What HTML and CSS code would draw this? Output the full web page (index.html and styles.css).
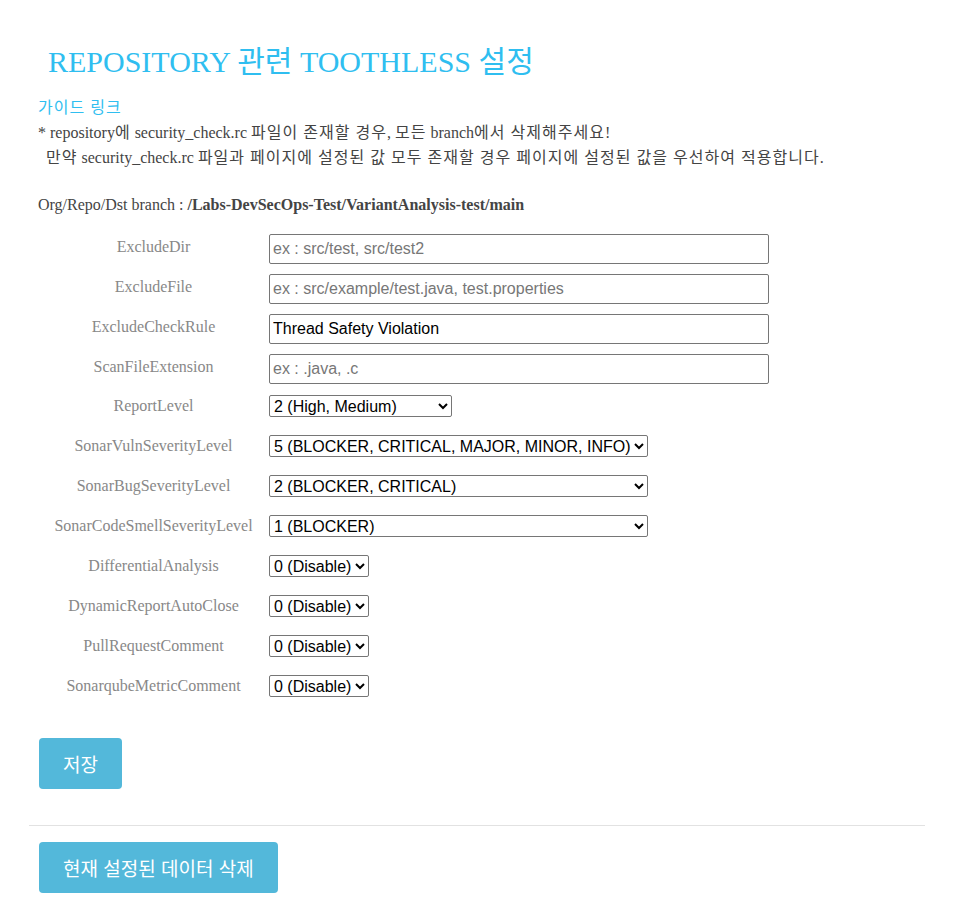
FILE: index.html
```html
<!DOCTYPE html>
<html lang="ko">
<head>
<meta charset="utf-8">
<title>Toothless 설정</title>
<link rel="stylesheet" href="styles.css">
</head>
<body>
<div class="page">
  <h1 class="title">REPOSITORY 관련 TOOTHLESS 설정</h1>
  <div class="notice">
    <a class="guide" href="#">가이드 링크</a>
    <p class="line">* repository<span class="ko">에</span> security_check.rc <span class="ko">파일이 존재할 경우</span>, <span class="ko">모든</span> branch<span class="ko">에서 삭제해주세요</span>!</p>
    <p class="line">&nbsp;&nbsp;<span class="ko">만약</span> security_check.rc <span class="ko">파일과 페이지에 설정된 값 모두 존재할 경우 페이지에 설정된 값을 우선하여 적용합니다</span>.</p>
  </div>
  <p class="branch">Org/Repo/Dst branch : <b>/Labs-DevSecOps-Test/VariantAnalysis-test/main</b></p>

  <div class="form">
    <div class="row row-input">
      <label class="label">ExcludeDir</label>
      <input class="text" type="text" placeholder="ex : src/test, src/test2">
    </div>
    <div class="row row-input">
      <label class="label">ExcludeFile</label>
      <input class="text" type="text" placeholder="ex : src/example/test.java, test.properties">
    </div>
    <div class="row row-input">
      <label class="label">ExcludeCheckRule</label>
      <input class="text" type="text" value="Thread Safety Violation">
    </div>
    <div class="row row-input">
      <label class="label">ScanFileExtension</label>
      <input class="text" type="text" placeholder="ex : .java, .c">
    </div>
    <div class="row row-select first-select">
      <label class="label">ReportLevel</label>
      <select class="sel sel-report"><option>2 (High, Medium)</option></select>
    </div>
    <div class="row row-select">
      <label class="label">SonarVulnSeverityLevel</label>
      <select class="sel sel-wide"><option>5 (BLOCKER, CRITICAL, MAJOR, MINOR, INFO)</option></select>
    </div>
    <div class="row row-select">
      <label class="label">SonarBugSeverityLevel</label>
      <select class="sel sel-wide"><option>2 (BLOCKER, CRITICAL)</option></select>
    </div>
    <div class="row row-select">
      <label class="label">SonarCodeSmellSeverityLevel</label>
      <select class="sel sel-wide"><option>1 (BLOCKER)</option></select>
    </div>
    <div class="row row-select">
      <label class="label">DifferentialAnalysis</label>
      <select class="sel"><option>0 (Disable)</option></select>
    </div>
    <div class="row row-select">
      <label class="label">DynamicReportAutoClose</label>
      <select class="sel"><option>0 (Disable)</option></select>
    </div>
    <div class="row row-select">
      <label class="label">PullRequestComment</label>
      <select class="sel"><option>0 (Disable)</option></select>
    </div>
    <div class="row row-select">
      <label class="label">SonarqubeMetricComment</label>
      <select class="sel"><option>0 (Disable)</option></select>
    </div>
  </div>

  <div class="actions actions-save">
    <button class="btn" type="button">저장</button>
  </div>
  <hr class="divider">
  <div class="actions">
    <button class="btn" type="button">현재 설정된 데이터 삭제</button>
  </div>
</div>
</body>
</html>
```

FILE: styles.css
```css
html, body {
  margin: 0;
  padding: 0;
  background: #ffffff;
}

body {
  font-family: "Liberation Serif", "Noto Sans CJK KR", serif;
  color: #333333;
}

.page {
  margin: 0 30px 0 29px;
  padding-top: 40px;
  padding-bottom: 22px;
}

.title {
  margin: 0 0 0 19px;
  font-size: 30px;
  font-weight: normal;
  line-height: 44px;
  color: #2fbef0;
}

.notice {
  margin: 11px 0 0 9px;
  font-size: 16px;
}

.guide {
  display: block;
  color: #2fbef0;
  text-decoration: none;
  line-height: 25px;
  letter-spacing: 1px;
}

.line {
  margin: 0;
  line-height: 25px;
  color: #444444;
  white-space: nowrap;
}

.ko {
  letter-spacing: 1.02px;
}

.branch {
  margin: 24px 0 0 9px;
  font-size: 16px;
  line-height: 22px;
  color: #444444;
}

.branch b {
  color: #444444;
}

.form {
  margin-top: 18px;
  display: flex;
  flex-direction: column;
}

.row {
  display: flex;
  align-items: center;
}

.row-input {
  height: 30px;
  margin-bottom: 10px;
}

.row-select {
  height: 22px;
  margin-bottom: 18px;
}

.first-select {
  margin-top: 1px;
}

.label {
  width: 231px;
  margin-left: 9px;
  flex: none;
  text-align: center;
  font-size: 16px;
  color: #888888;
  position: relative;
}

.row-input .label {
  top: -2px;
}

.row-select .label {
  top: 0;
}

.text {
  box-sizing: border-box;
  width: 500px;
  height: 30px;
  margin: 0;
  padding: 0 3px;
  border: 1px solid #767676;
  border-radius: 2px;
  font-family: "Liberation Sans", Arial, sans-serif;
  font-size: 16px;
  color: #000000;
  background: #ffffff;
}

.text::placeholder {
  color: #777777;
}

.sel {
  box-sizing: border-box;
  height: 22px;
  margin: 0;
  font-family: "Liberation Sans", Arial, sans-serif;
  font-size: 16px;
  color: #000000;
  background: #ffffff;
  border: 1px solid #767676;
  border-radius: 2px;
}

.sel-report {
  width: 183px;
}

.sel-wide {
  width: 379px;
}

.actions {
  padding-left: 10px;
}

.actions-save {
  margin-top: 23px;
}

.btn {
  height: 51px;
  padding: 0 24px;
  border: none;
  border-radius: 4px;
  background: #53b8da;
  color: #ffffff;
  font-family: "Noto Sans CJK KR", "Noto Sans", sans-serif;
  font-size: 19px;
  cursor: pointer;
}

.divider {
  margin: 36px 0 16px 0;
  border: none;
  border-top: 1px solid #e2e2e2;
  height: 0;
}
```
